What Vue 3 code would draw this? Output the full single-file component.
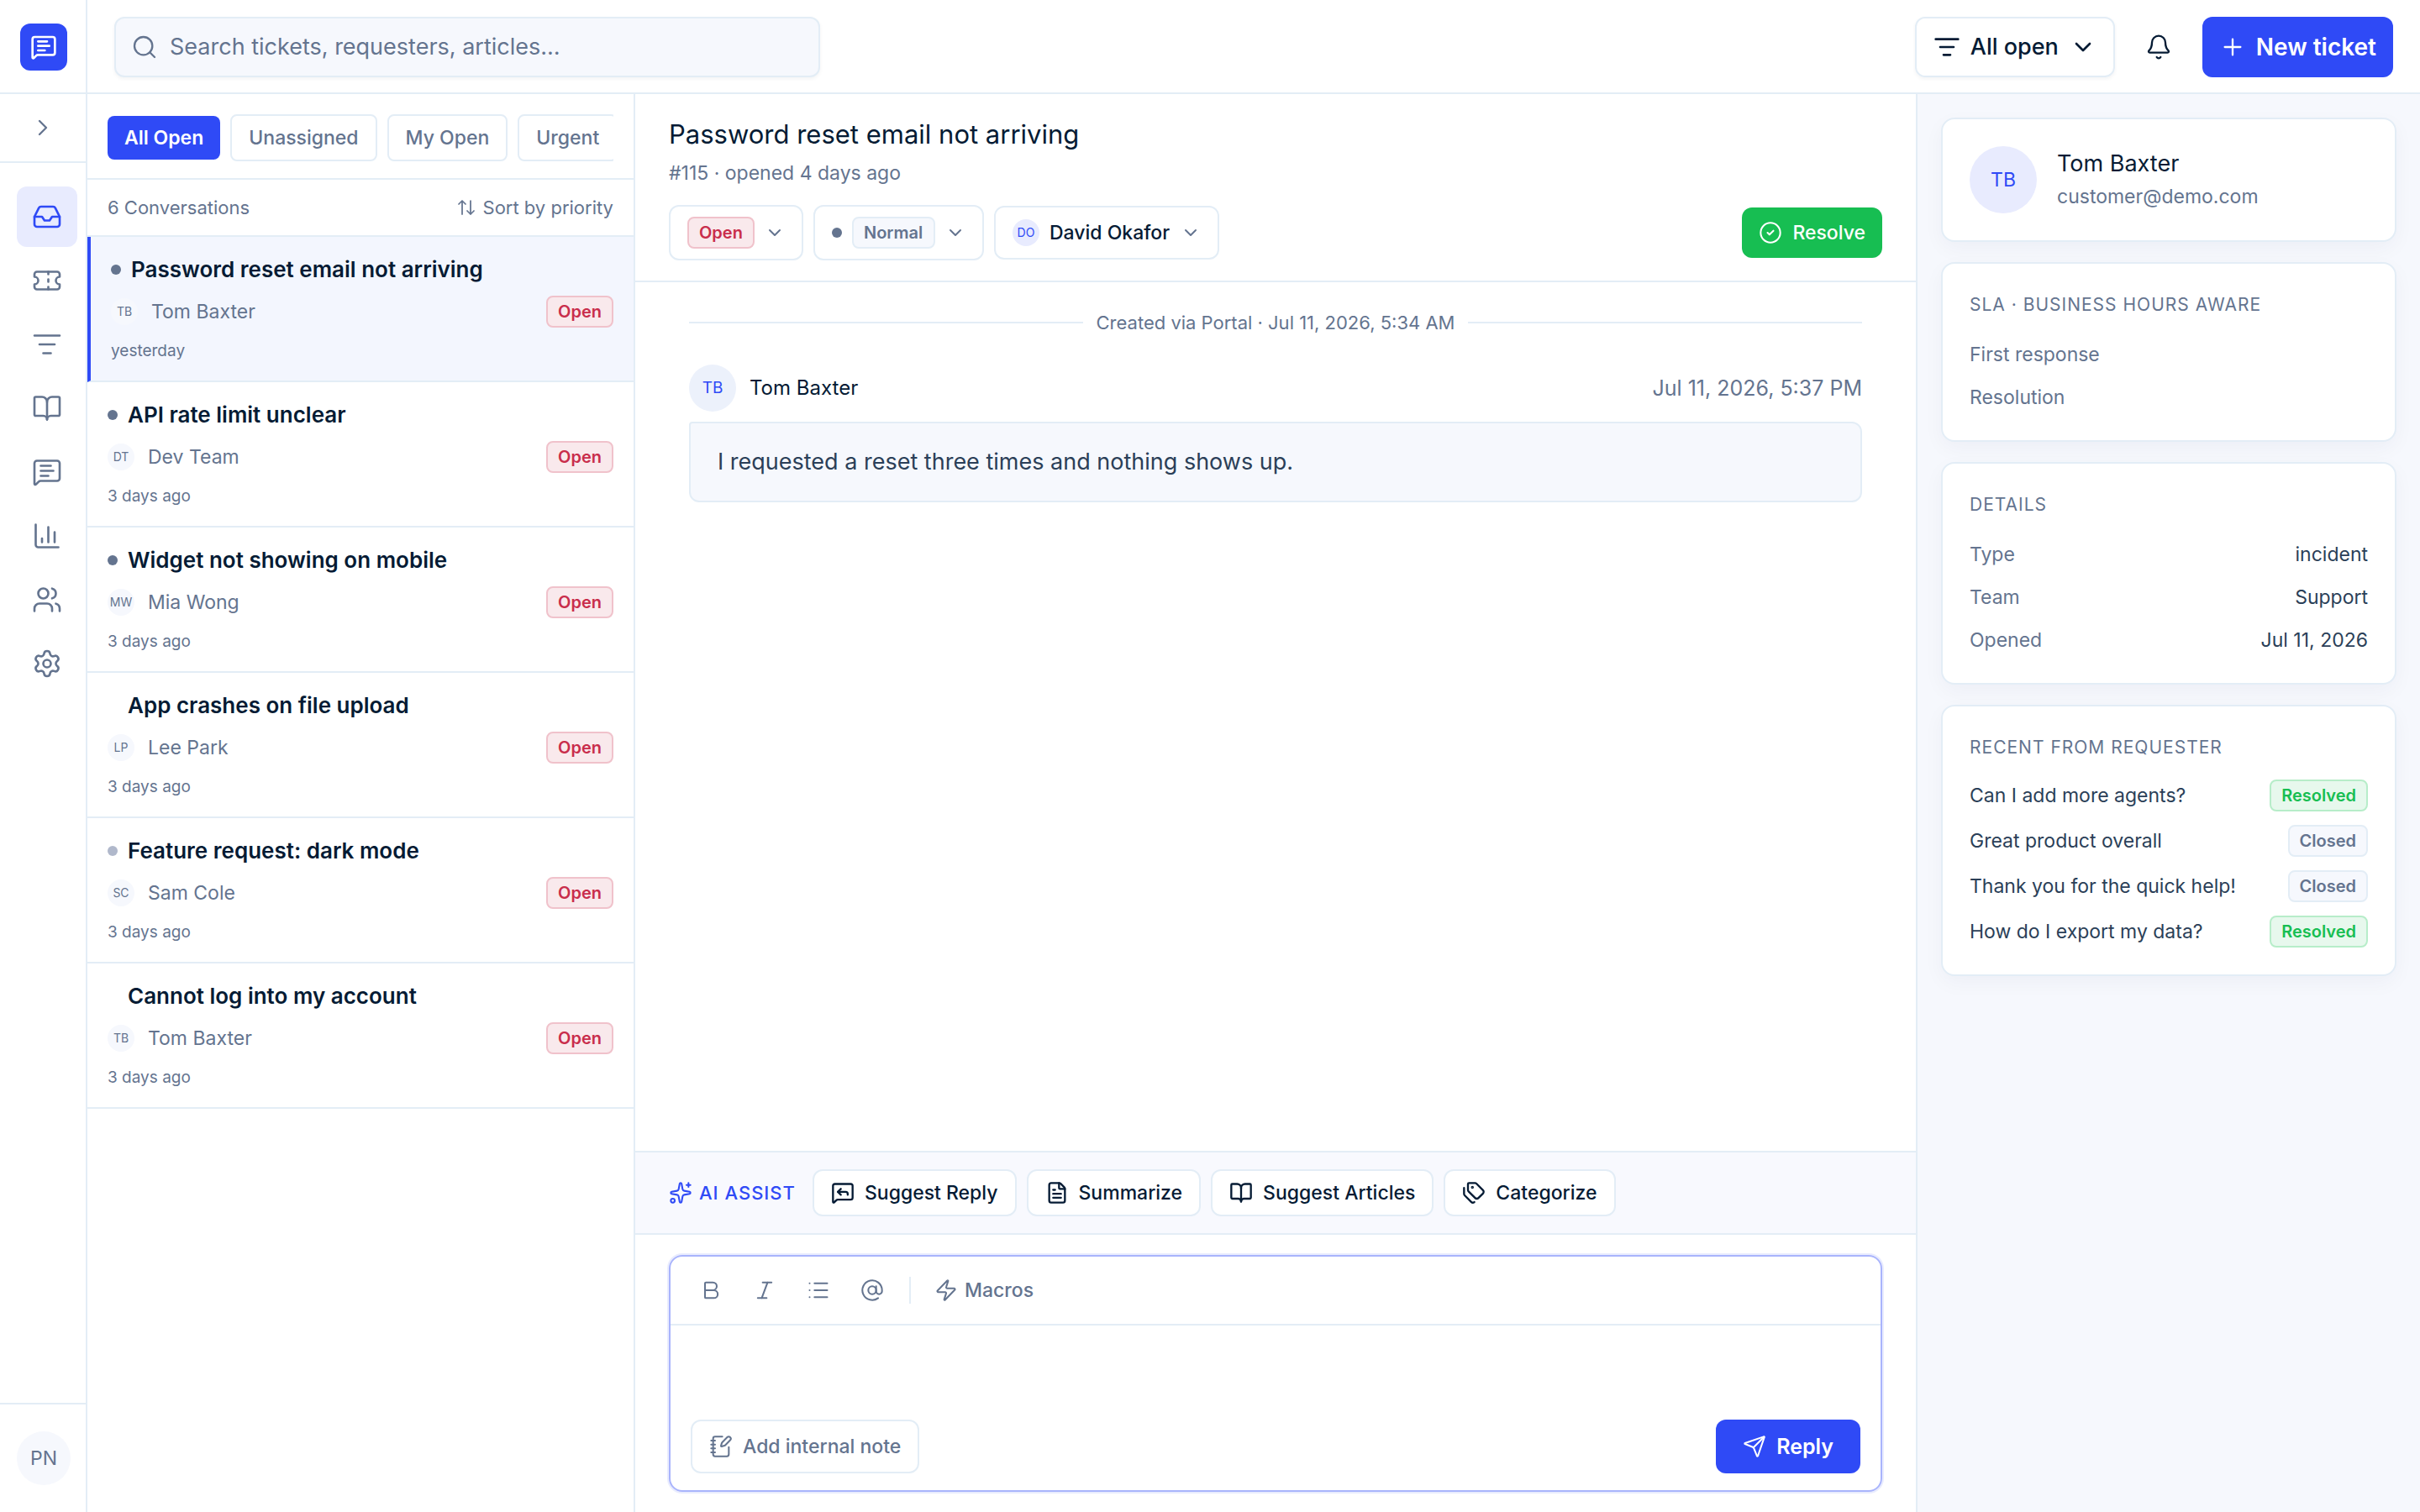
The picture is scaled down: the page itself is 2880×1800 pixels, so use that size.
<template>
    <div class="app">
        <aside class="rail">
            <div class="rail-logo">
                <a href="#" class="logo" aria-label="Home"><Icon name="message" /></a>
            </div>
            <div class="rail-toggle">
                <button aria-label="Expand menu"><Icon name="chevronRight" /></button>
            </div>
            <nav class="rail-nav">
                <a v-for="item in navItems" :key="item.icon" href="#" :aria-label="item.label"
                    :class="{ active: item.icon === activeNav }" @click.prevent="activeNav = item.icon">
                    <Icon :name="item.icon" />
                </a>
            </nav>
            <div class="rail-user">
                <span class="avatar">PN</span>
            </div>
        </aside>

        <div class="workspace">
            <header class="topbar">
                <label class="search">
                    <Icon name="search" />
                    <input v-model="query" type="search" aria-label="Search"
                        placeholder="Search tickets, requesters, articles…">
                </label>
                <div class="topbar-actions">
                    <label class="view-picker">
                        <Icon name="filter" />
                        <select aria-label="View">
                            <option>All open</option>
                        </select>
                        <Icon name="chevronDown" />
                    </label>
                    <button class="bell" aria-label="Notifications"><Icon name="bell" /></button>
                    <button class="new-ticket"><Icon name="plus" />New ticket</button>
                </div>
            </header>

            <div class="columns">
                <section class="list">
                    <div class="filters">
                        <button v-for="name in filters" :key="name" class="chip"
                            :class="{ active: name === activeFilter }" @click="activeFilter = name">{{ name }}</button>
                    </div>
                    <div class="list-head">
                        <span>{{ tickets.length }} Conversations</span>
                        <button class="sort"><Icon name="sort" />Sort by priority</button>
                    </div>
                    <ul class="tickets">
                        <li v-for="ticket in tickets" :key="ticket.id">
                            <a href="#" class="ticket" :class="{ selected: ticket.id === selectedId }"
                                @click.prevent="selectedId = ticket.id">
                                <div class="ticket-title">
                                    <span class="dot" :class="ticket.priority"></span>{{ ticket.title }}
                                </div>
                                <div class="ticket-meta">
                                    <span class="avatar small">{{ ticket.initials }}</span>
                                    <span>{{ ticket.requester }}</span>
                                    <span class="badge open">Open</span>
                                </div>
                                <div class="ticket-date">{{ ticket.date }}</div>
                            </a>
                        </li>
                    </ul>
                </section>

                <main class="conversation">
                    <div class="conversation-head">
                        <h1>Password reset email not arriving</h1>
                        <p>#115 · opened 4 days ago</p>
                        <div class="controls">
                            <label class="picker">
                                <select class="badge open" aria-label="Status">
                                    <option>Open</option>
                                </select>
                                <Icon name="chevronDown" />
                            </label>
                            <label class="picker">
                                <span class="dot normal"></span>
                                <select class="badge" aria-label="Priority">
                                    <option>Normal</option>
                                </select>
                                <Icon name="chevronDown" />
                            </label>
                            <label class="picker assignee">
                                <span class="avatar small blue">DO</span>
                                <select aria-label="Assignee">
                                    <option>David Okafor</option>
                                </select>
                                <Icon name="chevronDown" />
                            </label>
                            <button class="resolve"><Icon name="check" />Resolve</button>
                        </div>
                    </div>

                    <div class="thread">
                        <div class="event">Created via Portal · Jul 11, 2026, 5:34 AM</div>
                        <article class="message">
                            <div class="message-head">
                                <span class="avatar blue">TB</span>
                                <span class="author">Tom Baxter</span>
                                <time>Jul 11, 2026, 5:37 PM</time>
                            </div>
                            <p class="bubble">I requested a reset three times and nothing shows up.</p>
                        </article>
                    </div>

                    <div class="assist">
                        <span class="assist-label"><Icon name="sparkles" />AI ASSIST</span>
                        <button v-for="action in assistActions" :key="action.label">
                            <Icon :name="action.icon" />{{ action.label }}
                        </button>
                    </div>

                    <form class="composer" @submit.prevent="sendReply()">
                        <div class="toolbar">
                            <button v-for="tool in tools" :key="tool" type="button" :aria-label="tool">
                                <Icon :name="tool" />
                            </button>
                            <span class="separator"></span>
                            <button type="button" class="macros"><Icon name="zap" />Macros</button>
                        </div>
                        <textarea v-model="reply" aria-label="Reply"></textarea>
                        <div class="composer-foot">
                            <button type="button" class="note"><Icon name="note" />Add internal note</button>
                            <button type="submit" class="send"><Icon name="send" />Reply</button>
                        </div>
                    </form>
                </main>

                <aside class="details">
                    <section class="card requester">
                        <span class="avatar blue large">TB</span>
                        <div>
                            <div class="requester-name">Tom Baxter</div>
                            <div class="requester-email">customer@demo.com</div>
                        </div>
                    </section>
                    <section class="card">
                        <h2>SLA · BUSINESS HOURS AWARE</h2>
                        <dl>
                            <div><dt>First response</dt></div>
                            <div><dt>Resolution</dt></div>
                        </dl>
                    </section>
                    <section class="card">
                        <h2>DETAILS</h2>
                        <dl>
                            <div v-for="row in details" :key="row.label">
                                <dt>{{ row.label }}</dt>
                                <dd>{{ row.value }}</dd>
                            </div>
                        </dl>
                    </section>
                    <section class="card">
                        <h2>RECENT FROM REQUESTER</h2>
                        <ul class="recent">
                            <li v-for="item in recent" :key="item.title">
                                <a href="#">{{ item.title }}</a>
                                <span class="badge" :class="item.status.toLowerCase()">{{ item.status }}</span>
                            </li>
                        </ul>
                    </section>
                </aside>
            </div>
        </div>
    </div>
</template>

<script setup>
import { h, ref } from 'vue';

const bubble = '<path d="M22 17a2 2 0 0 1-2 2H6.828a2 2 0 0 0-1.414.586l-2.202 2.202A.71.71 0 0 1 2 21.286V5a2 2 0 0 1 2-2h16a2 2 0 0 1 2 2z"/>';

// 24x24 stroke icons
const icons = {
    message: bubble + '<path d="M7 11h10M7 15h6M7 7h8"/>',
    suggest: bubble + '<path d="m10 8-3 3 3 3"/><path d="M17 14v-1a2 2 0 0 0-2-2H7"/>',
    chevronRight: '<path d="m9 18 6-6-6-6"/>',
    chevronDown: '<path d="m6 9 6 6 6-6"/>',
    inbox: '<path d="M22 12h-6l-2 3h-4l-2-3H2"/><path d="M5.45 5.11 2 12v6a2 2 0 0 0 2 2h16a2 2 0 0 0 2-2v-6l-3.45-6.89A2 2 0 0 0 16.76 4H7.24a2 2 0 0 0-1.79 1.11z"/>',
    ticket: '<path d="M2 9a3 3 0 0 1 0 6v2a2 2 0 0 0 2 2h16a2 2 0 0 0 2-2v-2a3 3 0 0 1 0-6V7a2 2 0 0 0-2-2H4a2 2 0 0 0-2 2Z"/><path d="M13 5v2M13 17v2M13 11v2"/>',
    filter: '<path d="M2 5h20M6 12h12M9 19h6"/>',
    book: '<path d="M12 7v14"/><path d="M3 18a1 1 0 0 1-1-1V4a1 1 0 0 1 1-1h5a4 4 0 0 1 4 4 4 4 0 0 1 4-4h5a1 1 0 0 1 1 1v13a1 1 0 0 1-1 1h-6a3 3 0 0 0-3 3 3 3 0 0 0-3-3z"/>',
    chart: '<path d="M3 3v16a2 2 0 0 0 2 2h16M18 17V9M13 17V5M8 17v-3"/>',
    users: '<path d="M16 21v-2a4 4 0 0 0-4-4H6a4 4 0 0 0-4 4v2"/><path d="M16 3.128a4 4 0 0 1 0 7.744"/><path d="M22 21v-2a4 4 0 0 0-3-3.87"/><circle cx="9" cy="7" r="4"/>',
    settings: '<path d="M9.671 4.136a2.34 2.34 0 0 1 4.659 0 2.34 2.34 0 0 0 3.319 1.915 2.34 2.34 0 0 1 2.33 4.033 2.34 2.34 0 0 0 0 3.831 2.34 2.34 0 0 1-2.33 4.033 2.34 2.34 0 0 0-3.319 1.915 2.34 2.34 0 0 1-4.659 0 2.34 2.34 0 0 0-3.32-1.915 2.34 2.34 0 0 1-2.33-4.033 2.34 2.34 0 0 0 0-3.831A2.34 2.34 0 0 1 6.35 6.051a2.34 2.34 0 0 0 3.319-1.915"/><circle cx="12" cy="12" r="3"/>',
    search: '<path d="m21 21-4.34-4.34"/><circle cx="11" cy="11" r="8"/>',
    bell: '<path d="M10.268 21a2 2 0 0 0 3.464 0"/><path d="M3.262 15.326A1 1 0 0 0 4 17h16a1 1 0 0 0 .74-1.673C19.41 13.956 18 12.499 18 8A6 6 0 0 0 6 8c0 4.499-1.411 5.956-2.738 7.326"/>',
    plus: '<path d="M5 12h14M12 5v14"/>',
    sort: '<path d="m21 16-4 4-4-4M17 20V4M3 8l4-4 4 4M7 4v16"/>',
    check: '<circle cx="12" cy="12" r="10"/><path d="m9 12 2 2 4-4"/>',
    sparkles: '<path d="M11.017 2.814a1 1 0 0 1 1.966 0l1.051 5.558a2 2 0 0 0 1.594 1.594l5.558 1.051a1 1 0 0 1 0 1.966l-5.558 1.051a2 2 0 0 0-1.594 1.594l-1.051 5.558a1 1 0 0 1-1.966 0l-1.051-5.558a2 2 0 0 0-1.594-1.594l-5.558-1.051a1 1 0 0 1 0-1.966l5.558-1.051a2 2 0 0 0 1.594-1.594z"/><path d="M20 2v4M22 4h-4"/><circle cx="4" cy="20" r="2"/>',
    file: '<path d="M6 22a2 2 0 0 1-2-2V4a2 2 0 0 1 2-2h8a2.4 2.4 0 0 1 1.704.706l3.588 3.588A2.4 2.4 0 0 1 20 8v12a2 2 0 0 1-2 2z"/><path d="M14 2v5a1 1 0 0 0 1 1h5M10 9H8M16 13H8M16 17H8"/>',
    tags: '<path d="M13.172 2a2 2 0 0 1 1.414.586l6.71 6.71a2.4 2.4 0 0 1 0 3.408l-4.592 4.592a2.4 2.4 0 0 1-3.408 0l-6.71-6.71A2 2 0 0 1 6 9.172V3a1 1 0 0 1 1-1z"/><path d="M2 7v6.172a2 2 0 0 0 .586 1.414l6.71 6.71a2.4 2.4 0 0 0 3.191.193"/><circle cx="10.5" cy="6.5" r=".5" fill="currentColor"/>',
    bold: '<path d="M6 12h9a4 4 0 0 1 0 8H7a1 1 0 0 1-1-1V5a1 1 0 0 1 1-1h7a4 4 0 0 1 0 8"/>',
    italic: '<path d="M19 4h-9M14 20H5M15 4 9 20"/>',
    list: '<path d="M3 5h.01M3 12h.01M3 19h.01M8 5h13M8 12h13M8 19h13"/>',
    mention: '<circle cx="12" cy="12" r="4"/><path d="M16 8v5a3 3 0 0 0 6 0v-1a10 10 0 1 0-4 8"/>',
    zap: '<path d="M4 14a1 1 0 0 1-.78-1.63l9.9-10.2a.5.5 0 0 1 .86.46l-1.92 6.02A1 1 0 0 0 13 10h7a1 1 0 0 1 .78 1.63l-9.9 10.2a.5.5 0 0 1-.86-.46l1.92-6.02A1 1 0 0 0 11 14z"/>',
    note: '<path d="M13.4 2H6a2 2 0 0 0-2 2v16a2 2 0 0 0 2 2h12a2 2 0 0 0 2-2v-7.4M2 6h4M2 10h4M2 14h4M2 18h4"/><path d="M21.378 5.626a1 1 0 1 0-3.004-3.004l-5.01 5.012a2 2 0 0 0-.506.854l-.837 2.87a.5.5 0 0 0 .62.62l2.87-.837a2 2 0 0 0 .854-.506z"/>',
    send: '<path d="M14.536 21.686a.5.5 0 0 0 .937-.024l6.5-19a.496.496 0 0 0-.635-.635l-19 6.5a.5.5 0 0 0-.024.937l7.93 3.18a2 2 0 0 1 1.112 1.11z"/><path d="m21.854 2.147-10.94 10.939"/>',
};

const Icon = (props) => h('svg', {
    class: 'icon',
    viewBox: '0 0 24 24',
    'aria-hidden': 'true',
    innerHTML: icons[props.name],
});
Icon.props = ['name'];

const navItems = [
    { icon: 'inbox', label: 'Inbox' },
    { icon: 'ticket', label: 'Tickets' },
    { icon: 'filter', label: 'Views' },
    { icon: 'book', label: 'Articles' },
    { icon: 'message', label: 'Messages' },
    { icon: 'chart', label: 'Reports' },
    { icon: 'users', label: 'Customers' },
    { icon: 'settings', label: 'Settings' },
];

const filters = ['All Open', 'Unassigned', 'My Open', 'Urgent'];

const tickets = [
    { id: 1, title: 'Password reset email not arriving', initials: 'TB', requester: 'Tom Baxter', date: 'yesterday', priority: 'normal' },
    { id: 2, title: 'API rate limit unclear', initials: 'DT', requester: 'Dev Team', date: '3 days ago', priority: 'normal' },
    { id: 3, title: 'Widget not showing on mobile', initials: 'MW', requester: 'Mia Wong', date: '3 days ago', priority: 'normal' },
    { id: 4, title: 'App crashes on file upload', initials: 'LP', requester: 'Lee Park', date: '3 days ago', priority: 'none' },
    { id: 5, title: 'Feature request: dark mode', initials: 'SC', requester: 'Sam Cole', date: '3 days ago', priority: 'low' },
    { id: 6, title: 'Cannot log into my account', initials: 'TB', requester: 'Tom Baxter', date: '3 days ago', priority: 'none' },
];

const assistActions = [
    { icon: 'suggest', label: 'Suggest Reply' },
    { icon: 'file', label: 'Summarize' },
    { icon: 'book', label: 'Suggest Articles' },
    { icon: 'tags', label: 'Categorize' },
];

const tools = ['bold', 'italic', 'list', 'mention'];

const details = [
    { label: 'Type', value: 'incident' },
    { label: 'Team', value: 'Support' },
    { label: 'Opened', value: 'Jul 11, 2026' },
];

const recent = [
    { title: 'Can I add more agents?', status: 'Resolved' },
    { title: 'Great product overall', status: 'Closed' },
    { title: 'Thank you for the quick help!', status: 'Closed' },
    { title: 'How do I export my data?', status: 'Resolved' },
];

const activeNav = ref('inbox');
const activeFilter = ref('All Open');
const selectedId = ref(1);
const query = ref('');
const reply = ref('');

const sendReply = () => {
    reply.value = '';
};
</script>

<style>
body {
    margin: 0;
    background: #fff;
}
</style>

<style scoped>
.app {
    --ink: #051b34;
    --text: #2b3f58;
    --muted: #64748f;
    --line: #e3edf6;
    --soft: #f6f8fd;
    --blue: #2f4af6;
    --blue-soft: #e8ebfe;
    --green: #17be52;
    display: flex;
    min-height: 100vh;
    color: var(--ink);
    font-family: Inter, "Liberation Sans", sans-serif;
    font-size: 23px;
    line-height: 32px;
}

.app *,
.app *::before,
.app *::after {
    box-sizing: border-box;
}

h1,
h2,
p,
ul,
dl,
dd {
    margin: 0;
    padding: 0;
}

ul {
    list-style: none;
}

a {
    color: inherit;
    text-decoration: none;
}

button,
input,
select,
textarea {
    margin: 0;
    padding: 0;
    border: none;
    outline: none;
    background: none;
    color: inherit;
    font: inherit;
}

button {
    display: flex;
    align-items: center;
    justify-content: center;
    gap: 12px;
    white-space: nowrap;
    cursor: pointer;
}

select {
    appearance: none;
    cursor: pointer;
}

.icon {
    flex: none;
    width: 28px;
    height: 28px;
    fill: none;
    stroke: currentColor;
    stroke-width: 1.75;
    stroke-linecap: round;
    stroke-linejoin: round;
}

/* Shared pieces */
.avatar {
    display: flex;
    flex: none;
    align-items: center;
    justify-content: center;
    width: 56px;
    height: 56px;
    border-radius: 50%;
    background: var(--soft);
    color: var(--muted);
    font-size: 19px;
    font-weight: 400;
}

.avatar.small {
    width: 32px;
    height: 32px;
    font-size: 14px;
}

.avatar.blue {
    background: var(--blue-soft);
    color: var(--blue);
}

.avatar.large {
    width: 80px;
    height: 80px;
    font-size: 23px;
}

.dot {
    flex: none;
    width: 12px;
    height: 12px;
    border-radius: 50%;
}

.dot.normal {
    background: #64748f;
}

.dot.low {
    background: #b0b8cb;
}

.badge {
    height: 38px;
    padding: 0 12px;
    border: 2px solid var(--line);
    border-radius: 8px;
    background: var(--soft);
    color: var(--muted);
    font-size: 20px;
    font-weight: 600;
    line-height: 34px;
}

.badge.open {
    border-color: #f0c2cb;
    background: #f9e9ec;
    color: #c92d4b;
}

.badge.resolved {
    border-color: #b7edc9;
    background: #e7f8ed;
    color: var(--green);
}

/* Left rail */
.rail {
    display: flex;
    flex: none;
    flex-direction: column;
    width: 104px;
    border-right: 2px solid var(--line);
    color: var(--muted);
}

.rail-logo {
    display: flex;
    align-items: center;
    height: 112px;
    padding: 2px 0 0 24px;
    border-bottom: 2px solid var(--line);
}

.logo {
    display: flex;
    align-items: center;
    justify-content: center;
    width: 56px;
    height: 56px;
    border-radius: 12px;
    background: var(--blue);
    color: #fff;
}

.logo .icon {
    width: 32px;
    height: 32px;
    stroke-width: 2;
}

.rail-toggle {
    display: flex;
    justify-content: center;
    height: 82px;
    border-bottom: 2px solid var(--line);
}

.rail-toggle .icon {
    width: 32px;
    height: 32px;
}

.rail-nav {
    display: flex;
    flex: 1;
    flex-direction: column;
    gap: 4px;
    padding: 28px 0 0 20px;
}

.rail-nav a {
    display: flex;
    align-items: center;
    justify-content: center;
    width: 72px;
    height: 72px;
    border-radius: 12px;
}

.rail-nav a.active {
    background: var(--blue-soft);
    color: var(--blue);
}

.rail-nav .icon {
    width: 36px;
    height: 36px;
}

.rail-user {
    padding: 32px 20px;
    border-top: 2px solid var(--line);
}

.rail-user .avatar {
    width: 64px;
    height: 64px;
    font-size: 23px;
}

/* Top bar */
.workspace {
    display: flex;
    flex: 1;
    flex-direction: column;
    min-width: 0;
}

.topbar {
    display: flex;
    align-items: center;
    justify-content: space-between;
    height: 112px;
    padding: 2px 32px 0;
    border-bottom: 2px solid var(--line);
    font-size: 27px;
}

.search {
    display: flex;
    flex: 0 1 840px;
    align-items: center;
    gap: 14px;
    height: 72px;
    padding: 0 18px;
    border: 2px solid var(--line);
    border-radius: 12px;
    background: var(--soft);
    box-shadow: 0 2px 4px rgba(10, 30, 60, 0.05);
    color: var(--muted);
}

.search input {
    flex: 1;
    min-width: 0;
}

.search input::placeholder {
    color: var(--muted);
    opacity: 1;
}

.topbar .icon {
    width: 32px;
    height: 32px;
}

.topbar-actions {
    display: flex;
    gap: 16px;
}

.view-picker {
    display: flex;
    align-items: center;
    gap: 12px;
    height: 72px;
    padding: 0 20px;
    border: 2px solid var(--line);
    border-radius: 12px;
    box-shadow: 0 2px 4px rgba(10, 30, 60, 0.05);
    font-weight: 500;
}

.view-picker .icon {
    stroke-width: 2;
}

.bell {
    width: 72px;
}

.new-ticket {
    height: 72px;
    padding: 0 20px;
    border-radius: 12px;
    background: var(--blue);
    color: #fff;
    font-size: 28px;
    font-weight: 600;
}

/* Ticket list */
.columns {
    display: flex;
    flex: 1;
}

.list {
    flex: none;
    width: 652px;
    border-right: 2px solid var(--line);
    color: var(--muted);
}

.filters {
    display: flex;
    align-items: center;
    gap: 12px;
    margin: 0 24px;
    padding: 24px 0 20px;
    overflow: hidden;
}

.chip {
    flex: none;
    height: 56px;
    padding: 0 20px;
    border: 2px solid var(--line);
    border-radius: 8px;
    font-weight: 500;
}

.chip.active {
    height: 52px;
    border: none;
    background: var(--blue);
    color: #fff;
    font-weight: 600;
}

.list-head {
    display: flex;
    align-items: center;
    justify-content: space-between;
    height: 70px;
    padding: 0 24px;
    border-top: 2px solid var(--line);
    border-bottom: 2px solid var(--line);
    font-size: 22px;
}

.sort {
    gap: 8px;
}

.sort .icon {
    width: 24px;
    height: 24px;
}

.ticket {
    display: block;
    padding: 20px 24px;
    border-bottom: 2px solid var(--line);
}

.ticket.selected {
    border-left: 4px solid var(--blue);
    background: #f3f6fe;
}

.ticket-title {
    display: flex;
    align-items: center;
    gap: 12px;
    color: var(--ink);
    font-size: 26px;
    font-weight: 600;
    line-height: 38px;
}

.ticket-meta {
    display: flex;
    align-items: center;
    gap: 16px;
    margin: 12px 0;
}

.ticket-meta .badge {
    margin-left: auto;
}

.ticket-date {
    font-size: 19px;
    line-height: 31px;
}

/* Conversation */
.conversation {
    display: flex;
    flex: 1;
    flex-direction: column;
    min-width: 0;
}

.conversation-head {
    padding: 24px 40px;
    border-bottom: 2px solid var(--line);
}

.conversation-head h1 {
    font-size: 31px;
    font-weight: 400;
    line-height: 48px;
}

.conversation-head p {
    margin-top: 6px;
    color: var(--muted);
    line-height: 32px;
}

.controls {
    display: flex;
    align-items: center;
    gap: 12px;
    margin-top: 22px;
}

.picker {
    display: flex;
    align-items: center;
    gap: 12px;
    height: 66px;
    padding: 0 20px;
    border: 2px solid var(--line);
    border-radius: 12px;
}

.picker > .icon {
    width: 24px;
    height: 24px;
    color: var(--muted);
    stroke-width: 2;
}

.assignee {
    height: 64px;
    font-weight: 500;
}

.resolve {
    height: 60px;
    margin-left: auto;
    padding: 0 20px;
    border-radius: 12px;
    background: var(--green);
    color: #fff;
    font-weight: 500;
}

.thread {
    flex: 1;
    padding: 32px 64px;
}

.event {
    display: flex;
    align-items: center;
    gap: 16px;
    color: var(--muted);
    font-size: 22px;
}

.event::before,
.event::after {
    flex: 1;
    height: 2px;
    background: var(--line);
    content: "";
}

.message {
    margin-top: 34px;
}

.message-head {
    display: flex;
    align-items: center;
    gap: 16px;
}

.message-head .avatar {
    background: #ecf1fb;
}

.author {
    font-size: 24px;
}

.message-head time {
    margin-left: auto;
    color: var(--muted);
    font-size: 25px;
}

.bubble {
    margin-top: 12px;
    padding: 26px 32px;
    border: 2px solid var(--line);
    border-radius: 4px 12px 12px 12px;
    background: var(--soft);
    color: var(--text);
    font-size: 27px;
    line-height: 40px;
}

.assist {
    display: flex;
    align-items: center;
    gap: 12px;
    height: 100px;
    padding: 0 40px;
    border-top: 2px solid var(--line);
    border-bottom: 2px solid var(--line);
    background: #f8f9fe;
    font-weight: 500;
}

.assist-label {
    display: flex;
    align-items: center;
    gap: 8px;
    margin-right: 8px;
    color: var(--blue);
    font-size: 22px;
    letter-spacing: 1px;
}

.assist button {
    height: 56px;
    padding: 0 20px;
    border: 2px solid var(--line);
    border-radius: 12px;
    background: #fff;
}

.assist button .icon {
    stroke-width: 2;
}

/* Reply box */
.composer {
    display: flex;
    flex-direction: column;
    height: 282px;
    margin: 24px 40px;
    border: 2px solid #a9b4fc;
    border-radius: 16px;
    box-shadow: 0 0 0 2px #e9ecfe;
    color: var(--muted);
    font-weight: 500;
}

.toolbar {
    display: flex;
    align-items: center;
    gap: 8px;
    height: 82px;
    padding: 0 20px;
    border-bottom: 2px solid var(--line);
}

.toolbar button {
    width: 56px;
    height: 48px;
}

.toolbar .macros {
    gap: 8px;
    width: auto;
    padding: 0 12px;
}

.separator {
    width: 2px;
    height: 32px;
    margin: 0 8px;
    background: var(--line);
}

.composer textarea {
    flex: 1;
    padding: 16px 24px;
    color: var(--text);
    font-weight: 400;
    resize: none;
}

.composer-foot {
    display: flex;
    justify-content: space-between;
    padding: 0 24px 20px;
}

.note {
    height: 64px;
    padding: 0 20px;
    border: 2px solid var(--line);
    border-radius: 12px;
}

.send {
    height: 64px;
    padding: 0 32px;
    border-radius: 12px;
    background: var(--blue);
    color: #fff;
    font-size: 25px;
    font-weight: 600;
}

/* Right panel */
.details {
    display: flex;
    flex: none;
    flex-direction: column;
    gap: 24px;
    width: 600px;
    padding: 28px;
    border-left: 2px solid var(--line);
    background: var(--soft);
}

.card {
    padding: 32px;
    border: 2px solid var(--line);
    border-radius: 16px;
    background: #fff;
    box-shadow: 0 8px 24px rgba(20, 35, 80, 0.04);
}

.card h2 {
    margin-bottom: 21px;
    color: var(--muted);
    font-size: 21px;
    font-weight: 400;
    letter-spacing: 1px;
    line-height: 34px;
}

.requester {
    display: flex;
    align-items: center;
    gap: 24px;
}

.requester-name {
    font-size: 27px;
    line-height: 40px;
}

.requester-email {
    color: var(--muted);
    line-height: 38px;
}

dl {
    display: flex;
    flex-direction: column;
    gap: 13px;
    padding-top: 2px;
    line-height: 38px;
}

dl div,
.recent li {
    display: flex;
    align-items: center;
    justify-content: space-between;
}

dt {
    color: var(--muted);
}

dd,
.recent {
    color: var(--text);
}

.recent {
    display: flex;
    flex-direction: column;
    gap: 16px;
}
</style>
